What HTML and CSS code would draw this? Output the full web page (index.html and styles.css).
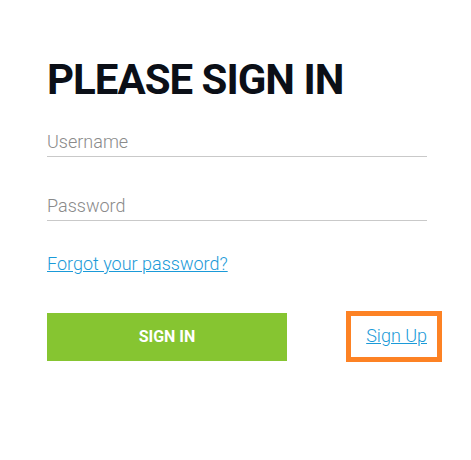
FILE: index.html
```html
<!DOCTYPE html>
<html lang="en">
<head>
    <meta charset="UTF-8">
    <meta name="viewport" content="width=device-width, initial-scale=1.0">
    <title>Please sign in</title>
    <link rel="stylesheet" href="styles.css">
</head>
<body>
    <div class="login">
        <h1>PLEASE SIGN IN</h1>
        <form class="login-form" onsubmit="return false">
            <input type="text" class="field" placeholder="Username">
            <input type="password" class="field" placeholder="Password">
            <a href="#" class="forgot">Forgot your password?</a>
            <div class="actions">
                <button type="submit" class="btn-signin">SIGN IN</button>
                <span class="signup-box"><a href="#" class="signup">Sign Up</a></span>
            </div>
        </form>
    </div>
</body>
</html>
```

FILE: styles.css
```css
body {
    margin: 0;
    padding: 0;
    background: #ffffff;
    font-family: 'Roboto', 'Liberation Sans', sans-serif;
}

.login {
    width: 380px;
    margin-left: 47px;
    padding-top: 55px;
}

h1 {
    margin: 0;
    font-size: 42px;
    line-height: 1.2;
    font-weight: 700;
    letter-spacing: -1px;
    color: #0b0f17;
}

.login-form {
    display: flex;
    flex-direction: column;
    margin-top: 25px;
}

.field {
    display: block;
    width: 100%;
    box-sizing: border-box;
    margin: 0 0 37px;
    padding: 0 0 4px;
    border: none;
    border-bottom: 1px solid #c9c9c9;
    font-family: inherit;
    font-size: 18px;
    font-weight: 300;
    line-height: 22px;
    height: 27px;
    color: #333;
    outline: none;
    background: transparent;
}

.field::placeholder {
    color: #8a8a8a;
}

.forgot, .signup {
    font-size: 18px;
    font-weight: 300;
    line-height: 22px;
    color: #1a9ad8;
    text-decoration: underline;
}

.forgot {
    align-self: flex-start;
    margin-top: -5px;
}

.actions {
    display: flex;
    align-items: center;
    margin-top: 36px;
}

.btn-signin {
    width: 240px;
    height: 48px;
    border: none;
    background: #86c531;
    color: #ffffff;
    font-family: inherit;
    font-size: 16px;
    font-weight: 700;
    cursor: pointer;
}

.signup-box {
    margin-left: auto;
    margin-right: -15px;
    padding: 9px 10px 10px 15px;
    border: 5px solid #fd8224;
}

.signup {
    display: block;
}
```
